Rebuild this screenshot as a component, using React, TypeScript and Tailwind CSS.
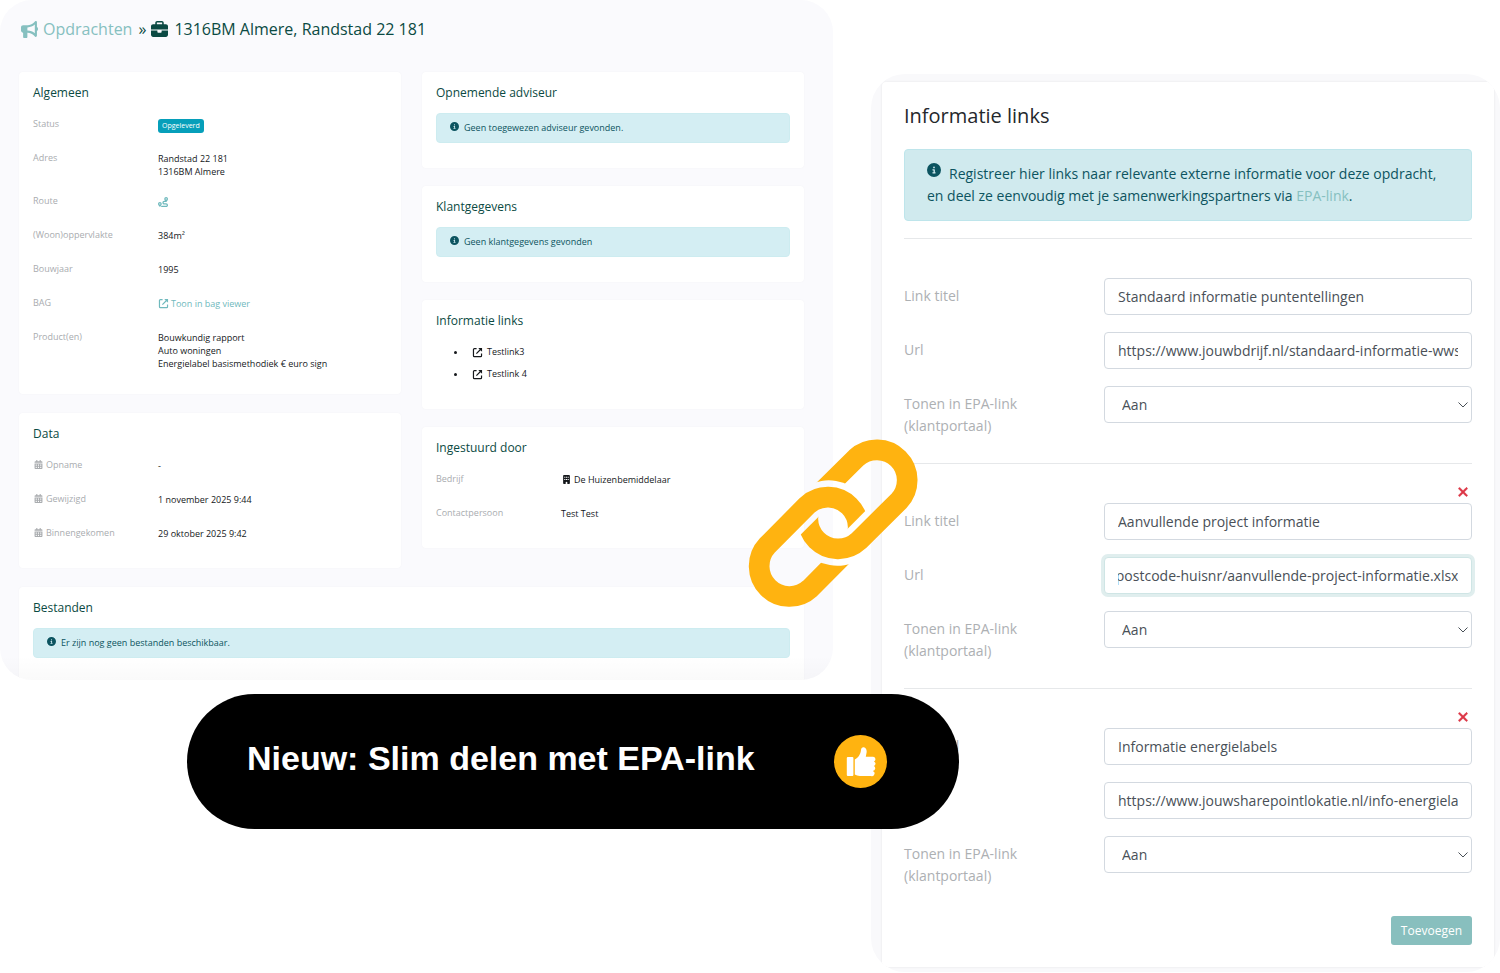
import { useLayoutEffect, useRef } from "react";
import type { ReactNode } from "react";
import {
  FaBriefcase,
  FaBuilding,
  FaBullhorn,
  FaCircleInfo,
  FaRoute,
  FaXmark,
} from "react-icons/fa6";
import { FaCalendarAlt } from "react-icons/fa";

const LINKS = [
  {
    title: "Standaard informatie puntentellingen",
    url: "https://www.jouwbdrijf.nl/standaard-informatie-wws-punten",
    removable: false,
    active: false,
  },
  {
    title: "Aanvullende project informatie",
    url: "https://www.jouwbedrijf.nl/postcode-huisnr/aanvullende-project-informatie.xlsx",
    removable: true,
    active: true,
  },
  {
    title: "Informatie energielabels",
    url: "https://www.jouwsharepointlokatie.nl/info-energielabels",
    removable: true,
    active: false,
  },
];

const DATES = [
  { label: "Opname", value: "-" },
  { label: "Gewijzigd", value: "1 november 2025 9:44" },
  { label: "Binnengekomen", value: "29 oktober 2025 9:42" },
];

function ExternalIcon() {
  return (
    <svg viewBox="0 0 12 12" className="size-[11px]" aria-hidden="true">
      <path
        d="M5 1.8H2.6a1 1 0 0 0-1 1v6.8a1 1 0 0 0 1 1h6.8a1 1 0 0 0 1-1V7M4.8 7.2 9.5 2.5"
        fill="none"
        stroke="currentColor"
        strokeWidth="1.3"
      />
      <path d="M6.8 1H11v4.2Z" fill="currentColor" />
    </svg>
  );
}

function ThumbIcon() {
  return (
    <svg viewBox="0 0 30 30" className="size-[30px] fill-white" aria-hidden="true">
      <rect x="0.8" y="10" width="6.6" height="19" rx="1" />
      <path d="M8.8 12.5C12 11 14.5 7.5 15 3 15.2 .8 16.5 0 17.8 .3 20 1 21 3 20.6 5.5L19.8 9.8H27a2.4 2.4 0 0 1 1 4.6 2.5 2.5 0 0 1-.3 4.7 2.5 2.5 0 0 1-.9 4.8 2.5 2.5 0 0 1-1.8 5H14C11.5 28.9 10.5 28 8.8 27.5Z" />
    </svg>
  );
}

// white card with a heading
function Card({ title, children }: { title: string; children: ReactNode }) {
  return (
    <section className="flow-root rounded-sm bg-white px-3.5 pt-3 shadow-[0_0_2px_rgba(0,0,0,0.04)]">
      <h2 className="text-xs leading-[18px] font-medium text-[#0b4a43]">{title}</h2>
      {children}
    </section>
  );
}

// label / value line
function Row({ label, children }: { label: ReactNode; children: ReactNode }) {
  return (
    <div className="flex min-h-[18px]">
      <dt className="w-[125px] shrink-0 text-[#a9acaf]">{label}</dt>
      <dd className="pt-px text-[#15181b]">{children}</dd>
    </div>
  );
}

function Rows({ children }: { children: ReactNode }) {
  return (
    <dl className="flex flex-col gap-4 pt-[15px] pb-6 text-[9px] leading-[13px]">
      {children}
    </dl>
  );
}

function Notice({ children }: { children: ReactNode }) {
  return (
    <div className="mt-[11px] mb-[25px] flex h-[30px] items-center gap-[5px] rounded-sm border border-[#cdecf0] bg-[#d4eef3] px-[13px] text-[9px] text-[#0c5460]">
      <FaCircleInfo className="mb-1 size-[9px]" />
      <span>{children}</span>
    </div>
  );
}

function ProjectPanel() {
  return (
    <main className="relative min-w-0 self-start overflow-hidden rounded-[32px] bg-[#fafafd] pr-[29px] pl-[19px]">
      <h1 className="flex h-[72px] items-center pb-3.5 pl-0.5 text-base font-medium text-[#0b4a43]">
        <a href="#opdrachten" className="flex items-center gap-[5px] text-[#86c0c0]">
          <FaBullhorn className="size-[17px]" />
          Opdrachten
        </a>
        <span className="mr-[5px] ml-1.5">»</span>
        <FaBriefcase className="mr-1.5 size-[17px]" />
        1316BM Almere, Randstad 22 181
      </h1>

      <div className="grid grid-cols-2 items-start gap-[21px]">
        <div className="flex flex-col gap-[19px]">
          <Card title="Algemeen">
            <Rows>
              <Row label="Status">
                <span className="mt-px block rounded-[3px] bg-[#069fba] px-1 text-[7px] leading-[14px] font-medium text-white">
                  Opgeleverd
                </span>
              </Row>
              <Row label="Adres">
                Randstad 22 181
                <br />
                1316BM Almere
              </Row>
              <Row label="Route">
                <a href="#route" aria-label="Route" className="block pt-0.5 text-[#6fb9bd]">
                  <FaRoute className="size-[10px]" />
                </a>
              </Row>
              <Row label="(Woon)oppervlakte">384m²</Row>
              <Row label="Bouwjaar">1995</Row>
              <Row label="BAG">
                <a href="#bag" className="flex items-center gap-0.5 text-[#6fb9bd]">
                  <ExternalIcon />
                  Toon in bag viewer
                </a>
              </Row>
              <Row label="Product(en)">
                Bouwkundig rapport
                <br />
                Auto woningen
                <br />
                Energielabel basismethodiek € euro sign
              </Row>
            </Rows>
          </Card>

          <Card title="Data">
            <Rows>
              {DATES.map(({ label, value }) => (
                <Row
                  key={label}
                  label={
                    <span className="flex items-center gap-[3px] pl-px">
                      <FaCalendarAlt className="size-[9px]" />
                      {label}
                    </span>
                  }
                >
                  {value}
                </Row>
              ))}
            </Rows>
          </Card>
        </div>

        <div className="flex flex-col gap-[18px]">
          <Card title="Opnemende adviseur">
            <Notice>Geen toegewezen adviseur gevonden.</Notice>
          </Card>
          <Card title="Klantgegevens">
            <Notice>Geen klantgegevens gevonden</Notice>
          </Card>
          <Card title="Informatie links">
            <ul className="flex flex-col gap-2 pt-[15px] pb-7 pl-[18px] text-[9px] leading-[14px] text-[#15181b]">
              {["Testlink3", "Testlink 4"].map((name) => (
                <li key={name} className="flex items-center">
                  <span className="mr-[15px] size-[3px] rounded-full bg-[#15181b]" />
                  <a href="#link" className="flex items-center gap-1">
                    <ExternalIcon />
                    {name}
                  </a>
                </li>
              ))}
            </ul>
          </Card>
          <Card title="Ingestuurd door">
            <Rows>
              <Row label="Bedrijf">
                <span className="flex items-center gap-[3px] pl-px">
                  <FaBuilding className="size-[9px]" />
                  De Huizenbemiddelaar
                </span>
              </Row>
              <Row label="Contactpersoon">Test Test</Row>
            </Rows>
          </Card>
        </div>
      </div>

      <div className="mt-[19px] -mb-[3px]">
        <Card title="Bestanden">
          <Notice>Er zijn nog geen bestanden beschikbaar.</Notice>
        </Card>
      </div>
      <div className="pointer-events-none absolute inset-x-0 bottom-0 h-6 bg-linear-to-t from-black/2 to-transparent" />
    </main>
  );
}

const FIELD =
  "h-[37px] w-full rounded border bg-white text-sm text-[#495057] outline-none";

function LinkFields({ index }: { index: number }) {
  const { title, url, removable, active } = LINKS[index];
  const urlRef = useRef<HTMLInputElement>(null);

  // the field being edited shows the end of its url
  useLayoutEffect(() => {
    if (active && urlRef.current) {
      urlRef.current.scrollLeft = urlRef.current.scrollWidth;
    }
  }, [active]);

  return (
    <fieldset className="border-t border-[#e6e8ea]">
      <div className="flex h-[39px] items-end justify-end pr-0.5 pb-1">
        {removable && (
          <button type="button" aria-label="Verwijderen" className="text-[#dc3545]">
            <FaXmark className="size-3.5 stroke-current stroke-24" />
          </button>
        )}
      </div>
      <div className="grid grid-cols-[200px_1fr] gap-y-[17px] text-sm leading-[22px] text-[#adb0b3]">
        <label htmlFor={`title-${index}`} className="pt-[7px]">
          Link titel
        </label>
        <input
          id={`title-${index}`}
          defaultValue={title}
          className={`${FIELD} border-[#d3d9e0] px-[13px]`}
        />
        <label htmlFor={`url-${index}`} className="pt-[7px]">
          Url
        </label>
        <input
          ref={urlRef}
          id={`url-${index}`}
          defaultValue={url}
          className={`${FIELD} px-[13px] ${
            active
              ? "border-[#cfe5e5] shadow-[0_0_0_3px_#e0eeee]"
              : "border-[#d3d9e0]"
          }`}
        />
        <label htmlFor={`show-${index}`} className="h-[37px] pt-[7px]">
          Tonen in EPA-link
          <br />
          (klantportaal)
        </label>
        <div className="relative">
          <select
            id={`show-${index}`}
            defaultValue="Aan"
            className={`${FIELD} appearance-none border-[#d3d9e0] px-[17px]`}
          >
            <option>Aan</option>
            <option>Uit</option>
          </select>
          <svg
            viewBox="0 0 10 6"
            className="pointer-events-none absolute top-4 right-1 h-1.5 w-2.5 fill-none stroke-[#495057]"
          >
            <path d="M0.5 0.5 5 5 9.5 0.5" />
          </svg>
        </div>
      </div>
    </fieldset>
  );
}

function LinksPanel() {
  return (
    <aside className="mt-[74px] min-w-0 self-start overflow-hidden rounded-[34px] bg-[#f9f9fb] pt-2 pr-1.5 pb-[5px] pl-[11px]">
      <form className="rounded-sm bg-white p-[22px] shadow-[0_0_3px_rgba(0,0,0,0.08)]">
        <h2 className="text-xl leading-6 text-[#24282c]">Informatie links</h2>
        <p className="mt-[21px] mb-[17px] rounded border border-[#bee5eb] bg-[#d0eaee] px-[22px] py-[13px] text-sm leading-[22px] text-[#0c5460]">
          <FaCircleInfo className="mr-2 inline size-3.5 align-top" />
          Registreer hier links naar relevante externe informatie voor deze
          opdracht, en deel ze eenvoudig met je samenwerkingspartners via{" "}
          <a href="#epa-link" className="text-[#86c0c0]">
            EPA-link
          </a>
          .
        </p>
        <div className="flex flex-col gap-10">
          {LINKS.map((link, index) => (
            <LinkFields key={link.title} index={index} />
          ))}
        </div>
        <div className="mt-[43px] flex justify-end">
          <button
            type="button"
            className="h-[29px] rounded-[3px] bg-[#88bfbe] px-2.5 text-xs text-white"
          >
            Toevoegen
          </button>
        </div>
      </form>
    </aside>
  );
}

// two interlocked chain links
function ChainIcon() {
  return (
    <svg
      viewBox="85 54 510 510"
      className="absolute top-[438px] left-[748px] size-[170px]"
      aria-hidden="true"
    >
      <mask id="upper" maskUnits="userSpaceOnUse" x="85" y="54" width="510" height="510">
        <rect x="85" y="54" width="510" height="510" fill="white" />
        <path d="M203.4 383.6A139 139 0 0 1 390.6 196.4Z" fill="black" />
      </mask>
      <mask id="lower" maskUnits="userSpaceOnUse" x="85" y="54" width="510" height="510">
        <rect x="85" y="54" width="510" height="510" fill="white" />
        <path d="M476.3 233.7A139 139 0 0 1 288.7 421.3Z" fill="black" />
      </mask>
      <g fill="none" stroke="#ffb310" strokeWidth="62">
        <path
          mask="url(#upper)"
          d="M288.7 233.7L409.7 113.7A91 91 0 0 1 538.3 242.3L417.3 362.3A91 91 0 0 1 288.7 233.7Z"
        />
        <path
          mask="url(#lower)"
          d="M142.7 376.7L262.7 255.7A91 91 0 0 1 391.3 384.3L271.3 505.3A91 91 0 0 1 142.7 376.7Z"
        />
      </g>
    </svg>
  );
}

function Banner() {
  return (
    <div className="absolute top-[694px] left-[187px] flex h-[135px] w-[772px] items-center justify-between rounded-full bg-black pr-[72px] pl-[60px] font-['Liberation_Sans',Arial,sans-serif]">
      <strong className="pb-1.5 text-[34px] whitespace-nowrap text-white">
        Nieuw: Slim delen met EPA-link
      </strong>
      <span className="flex size-[53px] items-center justify-center rounded-full bg-[#ffb310]">
        <ThumbIcon />
      </span>
    </div>
  );
}

export default function App() {
  return (
    <div className="relative grid min-h-screen grid-cols-[833fr_629fr] gap-[38px] overflow-hidden bg-white font-['Open_Sans',sans-serif]">
      <ProjectPanel />
      <LinksPanel />
      <ChainIcon />
      <Banner />
    </div>
  );
}
